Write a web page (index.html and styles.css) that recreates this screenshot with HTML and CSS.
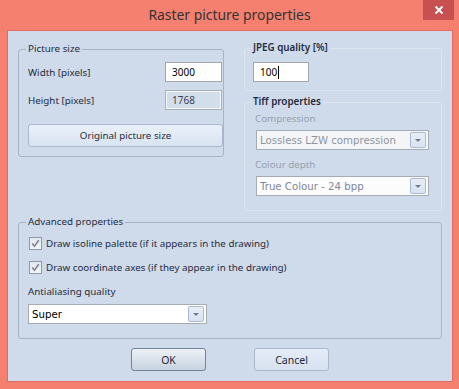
FILE: index.html
```html
<!DOCTYPE html>
<html>
<head>
<meta charset="utf-8">
<title>Raster picture properties</title>
<link rel="stylesheet" href="styles.css">
</head>
<body>
<div class="window">
  <div class="titlebar">
    <div class="title">Raster picture properties</div>
    <div class="close">
      <svg width="10" height="10" viewBox="0 0 10 10"><path d="M1.5 1.5 L8.5 8.5 M8.5 1.5 L1.5 8.5" stroke="#fff" stroke-width="1.9" fill="none"/></svg>
    </div>
  </div>
  <div class="client">
    <div class="top">
      <fieldset class="group group-size">
        <legend>Picture size</legend>
        <div class="row">
          <span class="label">Width [pixels]</span>
          <span class="input">3000</span>
        </div>
        <div class="row row-second">
          <span class="label">Height [pixels]</span>
          <span class="input input-disabled">1768</span>
        </div>
        <button class="btn btn-wide">Original picture size</button>
      </fieldset>
      <div class="rightcol">
        <fieldset class="group group-faint group-jpeg">
          <legend class="legend-bold">JPEG quality [%]</legend>
          <span class="input input-jpeg">100<span class="caret"></span></span>
        </fieldset>
        <fieldset class="group group-faint group-tiff">
          <legend class="legend-bold legend-tiff">Tiff properties</legend>
          <div class="sublabel">Compression</div>
          <div class="combo combo-tiff combo-disabled"><span class="combo-text">Lossless LZW compression</span><span class="drop"><span class="arrow"></span></span></div>
          <div class="sublabel sublabel-second">Colour depth</div>
          <div class="combo combo-tiff combo-grey"><span class="combo-text">True Colour - 24 bpp</span><span class="drop"><span class="arrow"></span></span></div>
        </fieldset>
      </div>
    </div>
    <fieldset class="group group-adv">
      <legend>Advanced properties</legend>
      <div class="check-row">
        <span class="checkbox"><svg width="11" height="11" viewBox="0 0 11 11"><path d="M2.2 5.6 L4.4 8.2 L8.8 2.2" stroke="#80868e" stroke-width="1.6" fill="none"/></svg></span>
        <span class="label">Draw isoline palette (if it appears in the drawing)</span>
      </div>
      <div class="check-row check-row-second">
        <span class="checkbox"><svg width="11" height="11" viewBox="0 0 11 11"><path d="M2.2 5.6 L4.4 8.2 L8.8 2.2" stroke="#80868e" stroke-width="1.6" fill="none"/></svg></span>
        <span class="label">Draw coordinate axes (if they appear in the drawing)</span>
      </div>
      <div class="sublabel sublabel-dark">Antialiasing quality</div>
      <div class="combo combo-aa"><span class="combo-text">Super</span><span class="drop"><span class="arrow"></span></span></div>
    </fieldset>
    <div class="buttons">
      <button class="btn btn-dialog btn-default">OK</button>
      <button class="btn btn-dialog">Cancel</button>
    </div>
  </div>
</div>
</body>
</html>
```
FILE: styles.css
```css
html, body {
  margin: 0;
  padding: 0;
}
body {
  width: 459px;
  height: 389px;
  background: #f5806f;
  overflow: hidden;
  font-family: "Noto Sans", "Open Sans", sans-serif;
  font-size: 9.8px;
  color: #1f2b3b;
}
.window {
  width: 459px;
  height: 389px;
}
.titlebar {
  height: 30px;
  display: grid;
  grid-template-columns: 1fr auto 1fr;
}
.title {
  grid-column: 2;
  font-size: 13.9px;
  line-height: 30px;
  color: #333333;
  white-space: nowrap;
}
.close {
  grid-column: 3;
  justify-self: end;
  align-self: start;
  width: 31px;
  height: 20px;
  margin-right: 5px;
  background: #c75050;
  display: flex;
  align-items: center;
  justify-content: center;
}
.close svg { display: block; }

.client {
  box-sizing: border-box;
  margin-left: 7px;
  width: 446px;
  height: 352px;
  border: 1px solid #df6c5f;
  background: #cfdbeb;
  padding: 10px 0 0 10px;
}
.top {
  display: grid;
  grid-template-columns: 206px 198px;
  column-gap: 20px;
  align-items: start;
}
.group {
  margin: 0;
  min-width: 0;
  border: 1px solid #a7b4c6;
  border-radius: 3px;
}
.group legend {
  padding: 0 2px;
  margin-left: -2px;
  line-height: 14px;
  font-size: 9.8px;
  white-space: nowrap;
}
.group-size {
  margin-top: 1px;
  padding: 6px 0 9px 9px;
}
.group-faint {
  border-color: #dde5ef;
}
.legend-bold {
  font-weight: 600;
  color: #1f2b3b;
}
.group-jpeg {
  padding: 7px 0 8px 8px;
  height: 50px;
  box-sizing: border-box;
}
.group-tiff {
  margin-top: 4px;
  padding: 2px 0 14px 11px;
}
.group .legend-tiff {
  margin-left: -5px;
}
.group-adv {
  margin-top: 4px;
  width: 424px;
  box-sizing: border-box;
  padding: 5px 0 14px 9px;
}

.row {
  display: flex;
  align-items: center;
  justify-content: space-between;
  height: 20px;
}
.row-second { margin-top: 8px; }
.label { white-space: nowrap; }

.input {
  box-sizing: border-box;
  display: flex;
  align-items: center;
  width: 57px;
  height: 20px;
  margin-right: 1px;
  padding-left: 6px;
  background: #ffffff;
  border: 1px solid #a2a7ae;
  font-size: 10px;
  color: #000000;
}
.input-disabled {
  background: #d3deeb;
  border-color: #a9afb7;
  box-shadow: inset 0 0 0 1px #f4f7fb;
  color: #3a3f55;
}
.input-jpeg {
  width: 56px;
  margin-right: 0;
}
.caret {
  display: inline-block;
  width: 1px;
  height: 13px;
  margin-left: 1px;
  background: #000;
}

.btn {
  box-sizing: border-box;
  display: flex;
  align-items: center;
  justify-content: center;
  margin: 0;
  padding: 0;
  font-family: "Noto Sans", "Open Sans", sans-serif;
  font-size: 9.8px;
  color: #1f2b3b;
  border: 1px solid #a9b8cc;
  border-radius: 3px;
  background: linear-gradient(#e9f0f9, #d8e3f1);
}
.btn-wide {
  width: 195px;
  height: 23px;
  margin-top: 14px;
}

.sublabel {
  line-height: 16px;
  height: 16px;
  margin-left: -1px;
  color: #95a0b0;
  white-space: nowrap;
}
.sublabel-second { margin-top: 7px; }
.sublabel-dark {
  color: #1f2b3b;
  margin-left: 0;
  margin-top: 8px;
}

.combo {
  box-sizing: border-box;
  display: flex;
  align-items: center;
  justify-content: space-between;
  height: 20px;
  padding: 0 2px 0 3px;
  border: 1px solid #a6acb4;
  background: #ffffff;
  font-family: "DejaVu Sans", "Verdana", sans-serif;
  font-size: 10.2px;
  color: #000;
}
.combo-tiff {
  width: 173px;
  margin-top: 3px;
}
.combo-disabled {
  background: #f4f5f7;
  color: #8d95a1;
}
.combo-grey {
  background: #fcfcfd;
  color: #7f8896;
}
.combo-aa {
  width: 179px;
  margin-top: 4px;
  margin-left: 0;
}
.combo-text { white-space: nowrap; }
.drop {
  box-sizing: border-box;
  width: 16px;
  height: 16px;
  border: 1px solid #a9bad1;
  border-radius: 2px;
  background: linear-gradient(#e6edf7, #d8e3f1);
  display: flex;
  align-items: center;
  justify-content: center;
}
.arrow {
  width: 0;
  height: 0;
  border-left: 3px solid transparent;
  border-right: 3px solid transparent;
  border-top: 3px solid #6f7b8b;
}

.check-row {
  display: flex;
  align-items: center;
  height: 18px;
}
.check-row-second { margin-top: 6px; }
.checkbox {
  box-sizing: border-box;
  width: 13px;
  height: 13px;
  margin-left: 1px;
  margin-right: 4px;
  border: 1px solid #8e99a7;
  background: linear-gradient(#e3e8ee, #f3f5f8);
  display: flex;
  align-items: center;
  justify-content: center;
}
.checkbox svg { display: block; }

.buttons {
  display: flex;
  justify-content: center;
  gap: 48px;
  margin-top: 9px;
  width: 424px;
  margin-left: 0;
}
.btn-dialog {
  width: 75px;
  height: 23px;
  font-size: 10.5px;
  background: linear-gradient(#e4ecf7, #d6e1ef);
}
.btn-default {
  border-color: #70849b;
  background: linear-gradient(#eef2f7, #c6d2e0);
}
```
